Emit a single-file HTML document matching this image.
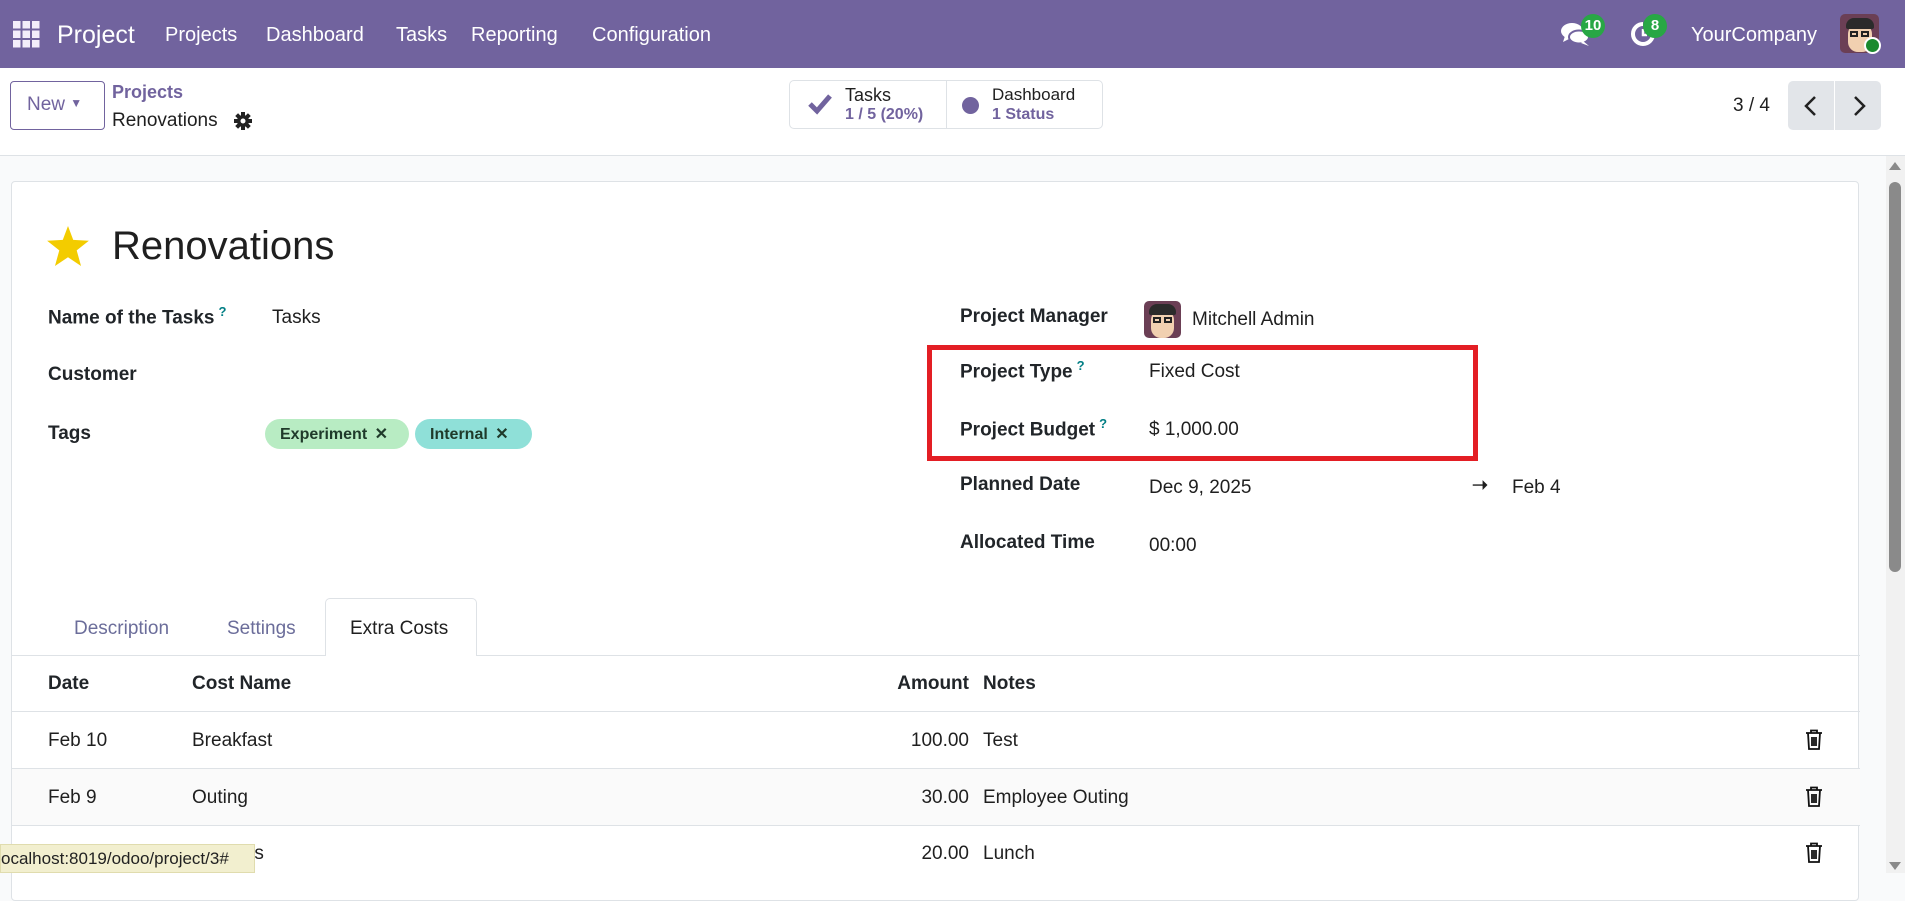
<!DOCTYPE html>
<html><head><meta charset="utf-8">
<style>
*{box-sizing:border-box;margin:0;padding:0}
body{width:1905px;height:873px;overflow:hidden;background:#f9fafb;font-family:"Liberation Sans",sans-serif;color:#1f1f1f;position:relative;font-size:19px}
.a{position:absolute;white-space:nowrap}
.nav{position:absolute;left:0;top:0;width:1905px;height:68px;background:#71639e}
.nav .a{color:#fff;font-size:20px;top:24px}
.cp{position:absolute;left:0;top:68px;width:1905px;height:88px;background:#fff;border-bottom:1px solid #dee2e6}
.sheet{position:absolute;left:11px;top:181px;width:1848px;height:720px;background:#fff;border:1px solid #dee2e6;border-radius:4px}
.lbl{font-weight:bold;color:#212529}
.help{color:#017e84;font-size:13px;font-weight:bold;vertical-align:super;margin-left:4px}
.pill{position:absolute;height:30px;border-radius:15px;font-size:16px;font-weight:bold;color:#1f3a2a;padding:5px 14px 0 15px}
.hl{position:absolute;left:0;width:1848px;height:1px;background:#dee2e6}
.trash{position:absolute;left:1793px}
</style></head><body>
<div class="nav">
  <svg class="a" style="left:13px;top:21px" width="27" height="27" viewBox="0 0 27 27" fill="#f3eefa">
    <rect x="0" y="0" width="7.5" height="7.5"/><rect x="9.5" y="0" width="7.5" height="7.5"/><rect x="19" y="0" width="7.5" height="7.5"/>
    <rect x="0" y="9.5" width="7.5" height="7.5"/><rect x="9.5" y="9.5" width="7.5" height="7.5"/><rect x="19" y="9.5" width="7.5" height="7.5"/>
    <rect x="0" y="19" width="7.5" height="7.5"/><rect x="9.5" y="19" width="7.5" height="7.5"/><rect x="19" y="19" width="7.5" height="7.5"/>
  </svg>
  <div class="a" style="left:57px;top:21px;font-size:25px">Project</div>
  <div class="a" style="left:165px">Projects</div>
  <div class="a" style="left:266px">Dashboard</div>
  <div class="a" style="left:396px">Tasks</div>
  <div class="a" style="left:471px">Reporting</div>
  <div class="a" style="left:592px">Configuration</div>
  <svg class="a" style="left:1561px;top:22px" width="30" height="26" viewBox="0 0 30 26" fill="#fff">
    <ellipse cx="11" cy="9" rx="11" ry="8"/><path d="M4 14 L2 20 L10 16Z"/>
    <ellipse cx="18" cy="15" rx="10" ry="6.5" fill="#fff" stroke="#71639e" stroke-width="2"/><path d="M22 19 L28 24 L20 21Z"/>
  </svg>
  <div class="a" style="left:1581px;top:14px;width:24px;height:24px;border-radius:12px;background:#28a745;font-size:15px;font-weight:bold;text-align:center;line-height:24px">10</div>
  <svg class="a" style="left:1629px;top:20px" width="28" height="28" viewBox="0 0 28 28"><path d="M14 4 A10 10 0 1 0 24 14" fill="none" stroke="#fff" stroke-width="4"/><path d="M14 9 V15 H18" fill="none" stroke="#fff" stroke-width="2.5"/></svg>
  <div class="a" style="left:1643px;top:14px;width:24px;height:24px;border-radius:12px;background:#28a745;font-size:15px;font-weight:bold;text-align:center;line-height:24px">8</div>
  <div class="a" style="left:1691px;top:24px">YourCompany</div>
  <div class="a" style="left:1840px;top:14px;width:39px;height:39px;border-radius:5px;background:#6b3f55;overflow:hidden">
    <div style="position:absolute;left:8px;top:10px;width:24px;height:28px;border-radius:10px;background:#f1d0b0"></div>
    <div style="position:absolute;left:6px;top:4px;width:28px;height:11px;border-radius:8px 8px 2px 2px;background:#2b2b2b"></div>
    <div style="position:absolute;left:10px;top:17px;width:8px;height:6px;border:2px solid #222"></div>
    <div style="position:absolute;left:21px;top:17px;width:8px;height:6px;border:2px solid #222"></div>
  </div>
  <div class="a" style="left:1864px;top:37px;width:17px;height:17px;border-radius:9px;background:#1b8a2e;border:2px solid #fff"></div>
</div>

<div class="cp">
  <div class="a" style="left:10px;top:13px;width:95px;height:49px;border:1px solid #71639e;border-radius:4px;color:#71639e;font-size:19px;padding:12px 0 0 16px">New <span style="font-size:12px;vertical-align:3px">&#9660;</span></div>
  <div class="a" style="left:112px;top:14px;color:#71639e;font-size:18px;font-weight:bold">Projects</div>
  <div class="a" style="left:112px;top:42px;font-size:19px">Renovations</div>
  <svg class="a" style="left:234px;top:44px" width="18" height="18" viewBox="0 0 18 18"><g fill="#222"><circle cx="9" cy="9" r="6"/><rect x="7" y="0" width="4" height="18"/><rect x="0" y="7" width="18" height="4"/><rect x="7" y="0" width="4" height="18" transform="rotate(45 9 9)"/><rect x="7" y="0" width="4" height="18" transform="rotate(-45 9 9)"/></g><circle cx="9" cy="9" r="2.5" fill="#fff"/></svg>
  <div class="a" style="left:789px;top:12px;width:314px;height:49px;border:1px solid #dee2e6;border-radius:5px"></div>
  <div class="a" style="left:946px;top:12px;width:1px;height:49px;background:#dee2e6"></div>
  <svg class="a" style="left:807px;top:24px" width="26" height="24" viewBox="0 0 26 24"><path d="M3 12 L10 19 L23 4" fill="none" stroke="#71639e" stroke-width="5"/></svg>
  <div class="a" style="left:845px;top:17px;font-size:18px">Tasks</div>
  <div class="a" style="left:845px;top:38px;font-size:16px;font-weight:bold;color:#71639e">1 / 5 (20%)</div>
  <div class="a" style="left:962px;top:29px;width:17px;height:17px;border-radius:9px;background:#71639e"></div>
  <div class="a" style="left:992px;top:17px;font-size:17px">Dashboard</div>
  <div class="a" style="left:992px;top:38px;font-size:16px;font-weight:bold;color:#71639e">1 Status</div>
  <div class="a" style="left:1733px;top:27px;font-size:19px">3 / 4</div>
  <div class="a" style="left:1788px;top:13px;width:93px;height:49px;background:#e2e5e9;border-radius:5px"></div>
  <div class="a" style="left:1834px;top:13px;width:1px;height:49px;background:#fff"></div>
  <svg class="a" style="left:1802px;top:27px" width="18" height="22" viewBox="0 0 18 22"><path d="M13 2 L4 11 L13 20" fill="none" stroke="#222" stroke-width="2.5"/></svg>
  <svg class="a" style="left:1850px;top:27px" width="18" height="22" viewBox="0 0 18 22"><path d="M5 2 L14 11 L5 20" fill="none" stroke="#222" stroke-width="2.5"/></svg>
</div>

<div class="sheet">
  <svg class="a" style="left:35px;top:44px" width="42" height="40" viewBox="0 0 24 23"><path d="M12 0 L15 8 L24 8.5 L17 14 L19.5 23 L12 18 L4.5 23 L7 14 L0 8.5 L9 8Z" fill="#f3cc00"/></svg>
  <div class="a" style="left:100px;top:42px;font-size:40px">Renovations</div>

  <div class="a lbl" style="left:36px;top:122px">Name of the Tasks<span class="help">?</span></div>
  <div class="a" style="left:260px;top:125px">Tasks</div>
  <div class="a lbl" style="left:36px;top:182px">Customer</div>
  <div class="a lbl" style="left:36px;top:241px">Tags</div>
  <div class="pill" style="left:253px;top:237px;width:144px;background:#b8ecc3">Experiment <span style="margin-left:3px">&#10005;</span></div>
  <div class="pill" style="left:403px;top:237px;width:117px;background:#8fe0d8">Internal <span style="margin-left:3px">&#10005;</span></div>

  <div class="a lbl" style="left:948px;top:124px">Project Manager</div>
  <div class="a" style="left:1132px;top:119px;width:37px;height:37px;border-radius:5px;background:#6b3f55;overflow:hidden">
    <div style="position:absolute;left:7px;top:9px;width:23px;height:28px;border-radius:10px;background:#f1d0b0"></div>
    <div style="position:absolute;left:5px;top:3px;width:27px;height:11px;border-radius:8px 8px 2px 2px;background:#2b2b2b"></div>
    <div style="position:absolute;left:9px;top:16px;width:8px;height:6px;border:2px solid #222"></div>
    <div style="position:absolute;left:20px;top:16px;width:8px;height:6px;border:2px solid #222"></div>
  </div>
  <div class="a" style="left:1180px;top:127px">Mitchell Admin</div>
  <div class="a lbl" style="left:948px;top:176px">Project Type<span class="help">?</span></div>
  <div class="a" style="left:1137px;top:179px">Fixed Cost</div>
  <div class="a lbl" style="left:948px;top:234px">Project Budget<span class="help">?</span></div>
  <div class="a" style="left:1137px;top:237px">$ 1,000.00</div>
  <div class="a lbl" style="left:948px;top:292px">Planned Date</div>
  <div class="a" style="left:1137px;top:295px">Dec 9, 2025</div>
  <div class="a" style="left:1460px;top:292px;font-weight:bold">&#10141;</div>
  <div class="a" style="left:1500px;top:295px">Feb 4</div>
  <div class="a lbl" style="left:948px;top:350px">Allocated Time</div>
  <div class="a" style="left:1137px;top:353px">00:00</div>
  <div class="a" style="left:915px;top:163px;width:551px;height:116px;border:5px solid #e31e24"></div>

  <div class="hl" style="top:473px"></div>
  <div class="a" style="left:313px;top:416px;width:152px;height:58px;background:#fff;border:1px solid #dee2e6;border-bottom:none;border-radius:5px 5px 0 0"></div>
  <div class="a" style="left:62px;top:436px;color:#6b6d9a">Description</div>
  <div class="a" style="left:215px;top:436px;color:#6b6d9a">Settings</div>
  <div class="a" style="left:338px;top:436px">Extra Costs</div>

  <div class="a lbl" style="left:36px;top:491px">Date</div>
  <div class="a lbl" style="left:180px;top:491px">Cost Name</div>
  <div class="a lbl" style="left:880px;top:491px;width:77px;text-align:right">Amount</div>
  <div class="a lbl" style="left:971px;top:491px">Notes</div>
  <div class="hl" style="top:529px"></div>
  <div class="a" style="left:36px;top:548px">Feb 10</div>
  <div class="a" style="left:180px;top:548px">Breakfast</div>
  <div class="a" style="left:860px;top:548px;width:97px;text-align:right">100.00</div>
  <div class="a" style="left:971px;top:548px">Test</div>
  <div class="hl" style="top:586px"></div>
  <div class="a" style="left:0;top:587px;width:1848px;height:57px;background:#fafafa"></div>
  <div class="a" style="left:36px;top:605px">Feb 9</div>
  <div class="a" style="left:180px;top:605px">Outing</div>
  <div class="a" style="left:860px;top:605px;width:97px;text-align:right">30.00</div>
  <div class="a" style="left:971px;top:605px">Employee Outing</div>
  <div class="hl" style="top:643px"></div>
  <div class="a" style="left:180px;top:661px">Lunches</div>
  <div class="a" style="left:860px;top:661px;width:97px;text-align:right">20.00</div>
  <div class="a" style="left:971px;top:661px">Lunch</div>
  <svg class="trash" style="top:547px" width="18" height="21" viewBox="0 0 18 21"><g fill="none" stroke="#111" stroke-width="1.8"><path d="M1 4 H17 M6 4 V1.5 H12 V4 M3 4 L4 20 H14 L15 4 M7 8 V17 M9 8 V17 M11 8 V17"/></g></svg>
  <svg class="trash" style="top:604px" width="18" height="21" viewBox="0 0 18 21"><g fill="none" stroke="#111" stroke-width="1.8"><path d="M1 4 H17 M6 4 V1.5 H12 V4 M3 4 L4 20 H14 L15 4 M7 8 V17 M9 8 V17 M11 8 V17"/></g></svg>
  <svg class="trash" style="top:660px" width="18" height="21" viewBox="0 0 18 21"><g fill="none" stroke="#111" stroke-width="1.8"><path d="M1 4 H17 M6 4 V1.5 H12 V4 M3 4 L4 20 H14 L15 4 M7 8 V17 M9 8 V17 M11 8 V17"/></g></svg>
</div>

<div class="a" style="left:1886px;top:156px;width:19px;height:717px;background:#f1f1f1"></div>
<div class="a" style="left:1889px;top:182px;width:12px;height:390px;border-radius:6px;background:#8a8a8a"></div>
<div class="a" style="left:1889px;top:162px;width:0;height:0;border-left:6px solid transparent;border-right:6px solid transparent;border-bottom:8px solid #8a8a8a"></div>
<div class="a" style="left:1889px;top:862px;width:0;height:0;border-left:6px solid transparent;border-right:6px solid transparent;border-top:8px solid #8a8a8a"></div>

<div class="a" style="left:0;top:844px;width:255px;height:29px;background:#f2efcf;border:1px solid #e0dcae;font-size:17px;padding:4px 0 0 0;color:#222">ocalhost:8019/odoo/project/3#</div>
</body></html>
